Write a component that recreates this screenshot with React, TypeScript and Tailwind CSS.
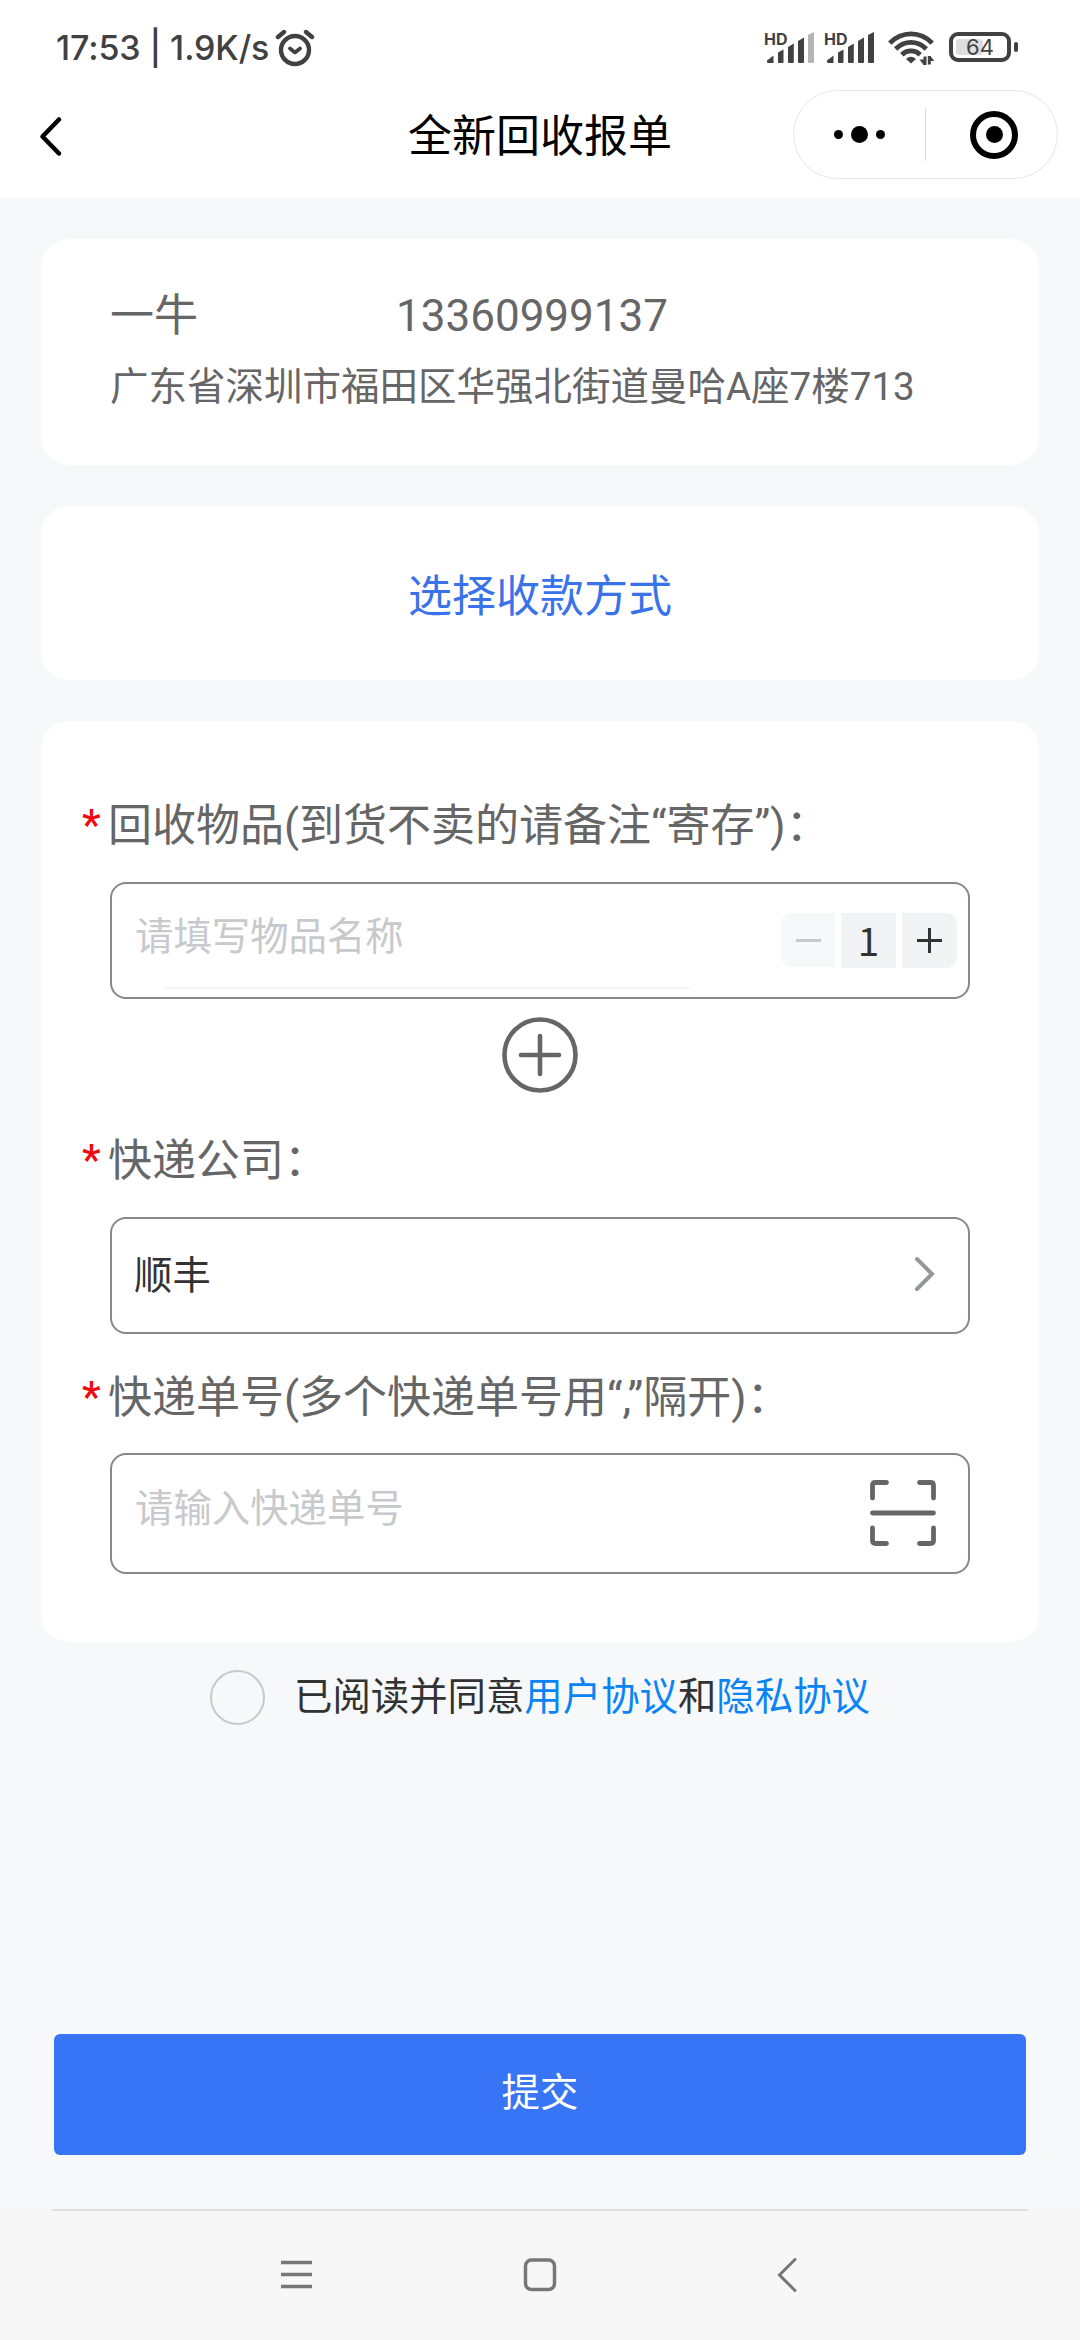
import type { ReactNode } from "react";

function AlarmIcon() {
  return (
    <svg width="40" height="38" viewBox="0 0 40 38" fill="none" stroke="#414141" strokeLinecap="round" strokeLinejoin="round">
      <circle cx="20" cy="21" r="14" strokeWidth="4.400" />
      <path d="M3 8 9 3M37 8 31 3" strokeWidth="4.400" />
      <path d="m15 19.400 5 4 5-4" strokeWidth="3.800" />
    </svg>
  );
}

function SignalIcon({ weak = false }: { weak?: boolean }) {
  return (
    <div className="relative flex h-[34px] w-[50px] shrink-0">
      <span className="absolute -left-px -top-[2px] whitespace-nowrap font-['Inter',sans-serif] text-[16px] font-bold leading-[20px] text-[#414141]">HD</span>
      <svg width="50" height="34" viewBox="0 0 50 34" fill="#414141">
        <path d="M2 29.500 8.500 24.500V32H3.500Q2 32 2 30.500Z" />
        <path d="M13 21.500 18.500 18.500V31Q18.500 32 17.500 32H14Q13 32 13 31Z" />
        <path d="M23 16 28.800 12.500V31Q28.800 32 27.800 32H24Q23 32 23 31Z" />
        <path d="M33 10 39 6.500V31Q39 32 38 32H34Q33 32 33 31Z" />
        <path d="M43 4 49 1V31Q49 32 48 32H44Q43 32 43 31Z" fill={weak ? "#b4b4b4" : "#414141"} />
      </svg>
    </div>
  );
}

function WifiIcon() {
  return (
    <svg width="46" height="35" viewBox="0 0 46 35" fill="none" stroke="#414141" strokeWidth="4.800">
      <path d="M1.800 12.200C13.500-.2 32.500-.2 44.200 12.200" />
      <path d="M7.700 18C16.500 9.200 29.500 9.200 38.300 18" />
      <path d="M13.800 23.700C19 18.700 27 18.700 32.200 23.700" />
      <path d="m23 32.500-5-4.500q5-4.500 10 0Z" fill="#414141" stroke="none" />
      <path d="M37 25.500V34M41.300 25V33.500" strokeWidth="3" />
      <path d="M31.500 28.500H36V34.500ZM42 30V24.500L46.500 30Z" fill="#414141" stroke="none" />
    </svg>
  );
}

function StatusBar() {
  return (
    <div className="flex h-[90px] items-start pl-[56px] pr-[62px] pt-[28px]">
      <div className="h-10 w-[219px] whitespace-nowrap font-['Inter',sans-serif] text-[34px] font-medium leading-10 tracking-[-0.1px] text-[#414141]">
        17:53 | 1.9K/s
      </div>
      <div className="pt-px">
        <AlarmIcon />
      </div>
      <div className="ml-auto flex pt-[3px]">
        <SignalIcon weak />
        <div className="w-[10px]" />
        <SignalIcon />
        <div className="w-[13px]" />
        <WifiIcon />
        <div className="ml-[15px] mt-px flex h-[30px] items-center gap-[3px]">
          <div className="flex h-[30px] w-[62px] rounded-[9px] border-4 border-[#414141] p-[3px]">
            <div className="w-[27px] shrink-0 rounded-[3px] bg-[#dedede]" />
            <span className="-ml-[17px] -mt-[3px] font-['Inter',sans-serif] text-[22px] leading-[23px] text-[#414141]">64</span>
          </div>
          <div className="h-[10px] w-1 rounded-sm bg-[#414141]" />
        </div>
      </div>
    </div>
  );
}

function TitleBar() {
  return (
    <div className="grid h-[108px] grid-cols-[1fr_264px_1fr]">
      <svg className="ml-[38px] mt-[26px]" width="26" height="42" viewBox="0 0 26 42" fill="none" stroke="#000" strokeWidth="4.500" strokeLinecap="round" strokeLinejoin="round">
        <path d="M21 3.500 4.500 20.500 21 37.500" />
      </svg>
      <h1 className="pt-[17px] text-[44px] leading-[60px] text-black">全新回收报单</h1>
      <div className="ml-[121px] flex h-[89px] w-[265px] items-center rounded-full border border-[#e6e6e6]">
        <div className="flex w-[132px] items-center justify-center gap-2 border-r border-[#dcdcdc] py-[18px]">
          <i className="size-[9px] rounded-full bg-black" />
          <i className="my-[0px] size-[17px] rounded-full bg-black" />
          <i className="size-[9px] rounded-full bg-black" />
        </div>
        <div className="flex flex-1 justify-center pl-[5px]">
          <div className="flex size-[48px] items-center justify-center rounded-full border-[6px] border-black">
            <i className="size-[17px] rounded-full bg-black" />
          </div>
        </div>
      </div>
    </div>
  );
}

function FieldLabel({ children }: { children: ReactNode }) {
  return (
    <div className="-ml-[28px] flex h-[60px] whitespace-nowrap text-[44px] leading-[60px] text-[#666]">
      <span className="w-[26px] text-[42px] font-medium leading-[58px] text-[#f00a0e]">*</span>
      <span>{children}</span>
    </div>
  );
}

function PlusCircle() {
  return (
    <svg width="76" height="76" viewBox="0 0 76 76" fill="none" stroke="#666" strokeWidth="4.600" strokeLinecap="round">
      <circle cx="38" cy="38" r="35.500" />
      <path d="M19 38H57M38 19V57" />
    </svg>
  );
}

function ScanIcon() {
  return (
    <svg className="-mt-px" width="68" height="68" viewBox="0 0 68 68" fill="none" stroke="#666" strokeWidth="4.800" strokeLinecap="round">
      <path d="M3.500 19V6.500Q3.500 3.500 6.500 3.500H17.500M50.500 3.500H61.500Q64.500 3.500 64.500 6.500V19M3.500 49V61.500Q3.500 64.500 6.500 64.500H17.500M50.500 64.500H61.500Q64.500 64.500 64.500 61.500V49M3.500 34H64.500" />
    </svg>
  );
}

function Stepper() {
  return (
    <div className="flex gap-[6px]">
      <div className="flex size-[54px] items-center justify-center rounded-l-[11px] bg-[#f7f8fa]">
        <div className="h-[3px] w-[25px] bg-[#c8c9cc]" />
      </div>
      <div className="flex h-[55px] w-[55px] items-center justify-center bg-[#f2f3f5] font-['Noto_Sans_CJK_SC',sans-serif] text-[38.500px] leading-[55px] text-[#323233]">
        <span className="-mt-[3px]">1</span>
      </div>
      <div className="flex size-[55px] items-center justify-center rounded-r-[11px] bg-[#f2f3f5]">
        <svg width="25" height="25" viewBox="0 0 25 25" stroke="#323233" strokeWidth="3">
          <path d="M0 12.500H25M12.500 0V25" />
        </svg>
      </div>
    </div>
  );
}

export default function App() {
  return (
    <div className="flex h-[2340px] w-[1080px] flex-col bg-[#f7f8fa] font-['Roboto','Noto_Sans_CJK_SC',sans-serif]" lang="zh-CN">
      <header className="h-[198px] bg-white">
        <StatusBar />
        <TitleBar />
      </header>

      <main className="flex flex-1 flex-col px-[41px] pt-[41px]">
        <section className="h-[226px] rounded-[28px] bg-white px-[69px] pt-[47px] text-[#666]">
          <div className="flex h-[60px] text-[44px] leading-[60px]">
            <span className="w-[286px]">一牛</span>
            <span>13360999137</span>
          </div>
          <p className="mt-[11px] whitespace-nowrap text-[38.500px] leading-[60px]">广东省深圳市福田区华强北街道曼哈A座7楼713</p>
        </section>

        <section className="mt-[41px] flex h-[174px] items-center justify-center rounded-[28px] bg-white text-[44px] text-[#3a72ea]">
          <span className="mt-[8px] leading-[60px]">选择收款方式</span>
        </section>

        <section className="mt-[41px] h-[921px] rounded-[28px] bg-white pl-[69px] pr-[69px] pt-[75px]">
          <FieldLabel>回收物品(到货不卖的请备注“寄存”)：</FieldLabel>
          <div className="mt-[26px] h-[117px] w-[860px] rounded-[16px] border-2 border-[#888] pl-[23px] pr-[11px] pt-[29px]">
            <div className="flex h-[74px] justify-between">
              <span className="-mt-[3px] text-[38.400px] leading-[54px] text-[#c8c9cc]">请填写物品名称</span>
              <Stepper />
            </div>
            <div className="ml-[30px] h-[2px] w-[525px] bg-[#f5f6f7]" />
          </div>
          <div className="mt-[18px] flex justify-center">
            <PlusCircle />
          </div>
          <div className="mt-[38px]">
            <FieldLabel>快递公司：</FieldLabel>
          </div>
          <div className="mt-[26px] flex h-[117px] w-[860px] items-center justify-between rounded-[16px] border-2 border-[#888] pl-[22px] pr-[32px]">
            <span className="text-[38.400px] text-[#323233]">顺丰</span>
            <svg className="-mt-[4px]" width="22" height="36" viewBox="0 0 22 36" fill="none" stroke="#969799" strokeWidth="4" strokeLinecap="round">
              <path d="M3 3 18 18 3 33" />
            </svg>
          </div>
          <div className="mt-[34px]">
            <FieldLabel>快递单号(多个快递单号用“,”隔开)：</FieldLabel>
          </div>
          <div className="mt-[25px] flex h-[121px] w-[860px] items-center justify-between rounded-[16px] border-2 border-[#888] pl-[23px] pr-[31px]">
            <span className="-mt-[10px] text-[38.400px] text-[#c8c9cc]">请输入快递单号</span>
            <ScanIcon />
          </div>
        </section>

        <div className="mt-[28px] flex h-[55px] items-center pl-[169px]">
          <div className="size-[55px] rounded-full border-2 border-[#c8c9cc]" />
          <p className="-mt-[2px] ml-[29px] whitespace-nowrap text-[38.400px] leading-[55px] text-[#323233]">
            已阅读并同意<a className="text-[#0a84f5]">用户协议</a>和<a className="text-[#0a84f5]">隐私协议</a>
          </p>
        </div>

        <button className="mx-[13px] mt-[309px] h-[121px] rounded-[6px] bg-[#3875f6] pb-[3px] text-[38.400px] text-white">提交</button>
      </main>

      <footer className="h-[132px] bg-[#f7f7f7] pt-px">
        <div className="mx-[52px] h-[2px] bg-[#dedede]" />
        <div className="flex items-center pl-[281px] pt-[47px]">
          <svg width="32" height="34" viewBox="0 0 32 34" stroke="#777" strokeWidth="3.500">
            <path d="M0 4.500H31M0 16.500H31M0 28.500H31" />
          </svg>
          <svg className="ml-[210px]" width="34" height="34" viewBox="0 0 34 34" fill="none" stroke="#777" strokeWidth="3.500">
            <rect x="2.500" y="2" width="29" height="29.500" rx="6" />
          </svg>
          <svg className="ml-[220px]" width="20" height="34" viewBox="0 0 20 34" fill="none" stroke="#777" strokeWidth="3" strokeLinecap="round">
            <path d="M18 1.500 2.500 17 18 32.500" />
          </svg>
        </div>
      </footer>
    </div>
  );
}
